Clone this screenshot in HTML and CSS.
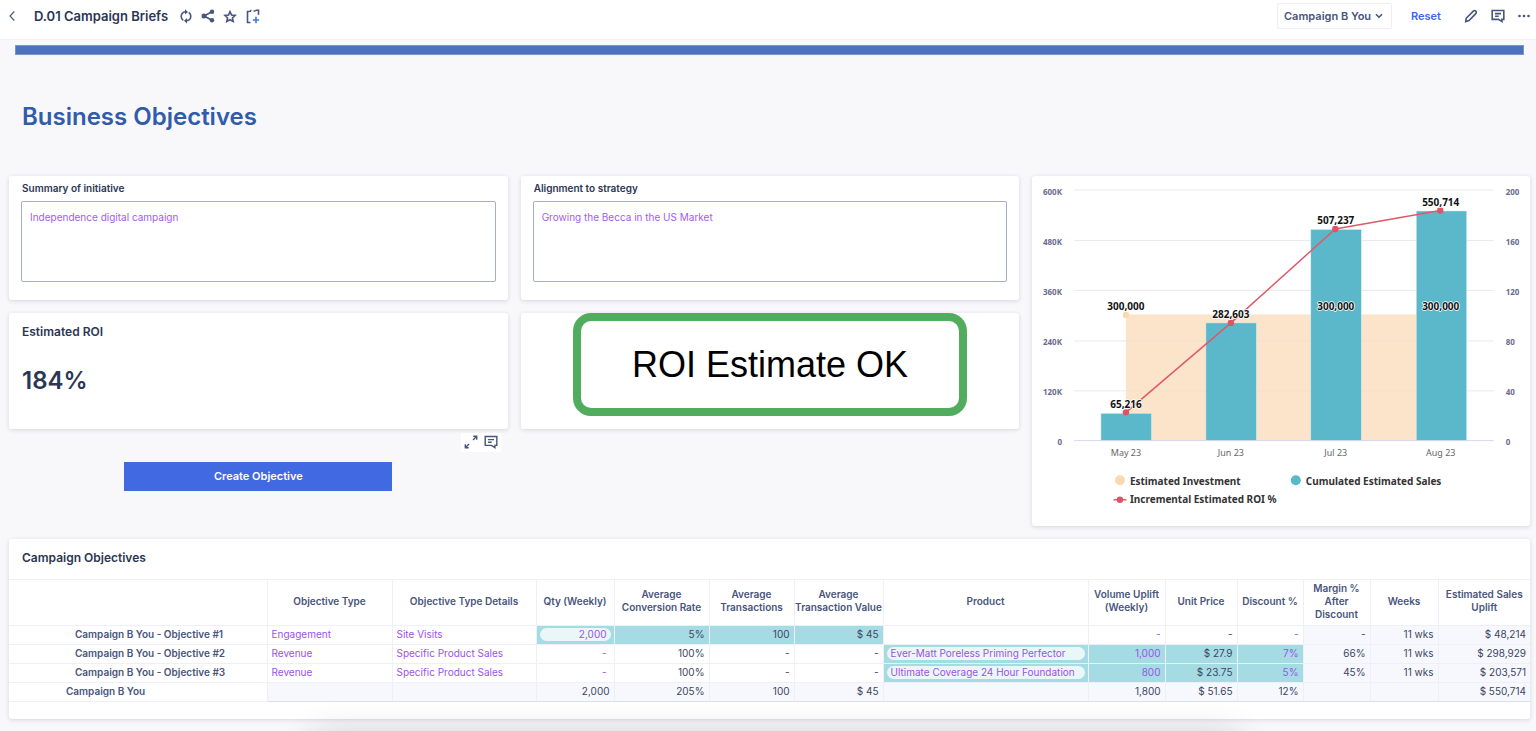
FILE: index.html
```html
<!DOCTYPE html>
<html lang="en">
<head>
<meta charset="utf-8">
<title>D.01 Campaign Briefs</title>
<link rel="stylesheet" href="styles.css">
</head>
<body>
<header class="topbar">
  <button class="icon-btn back" aria-label="Back"><svg width="8" height="12" viewBox="0 0 8 12"><path d="M6.200 1.500 2 6l4.200 4.500" /></svg></button>
  <h1 class="page-title">D.01 Campaign Briefs</h1>
  <div class="title-actions">
    <button class="icon-btn" aria-label="Refresh"><svg width="14" height="16" viewBox="0 0 14 16"><path d="M4.300 12.300A4.700 4.700 0 0 1 4.300 4.400Q5.200 3.800 6.500 3.800M9.700 4.300A4.700 4.700 0 0 1 9.700 12.200Q8.800 12.800 7.500 12.800"/><path class="solid" d="M6 1.200 9 3.900 6 6.500zM8 10.100v5.300L5 12.700z"/></svg></button>
    <button class="icon-btn share" aria-label="Share"><svg width="14" height="14" viewBox="0 0 14 14"><path d="M11 2.800 3 7l8 4.200"/><circle class="solid" cx="11" cy="2.700" r="2.200"/><circle class="solid" cx="3" cy="7" r="2.500"/><circle class="solid" cx="11" cy="11.300" r="2.200"/></svg></button>
    <button class="icon-btn" aria-label="Add to favourites"><svg width="14" height="16" viewBox="0 0 14 16"><path d="m7 3.700 1.500 3.300 3.600.4-2.700 2.500.8 3.600L7 11.700l-3.200 1.800.8-3.600-2.700-2.500 3.600-.4z"/></svg></button>
    <button class="icon-btn" aria-label="Add page"><svg width="16" height="16" viewBox="0 0 16 16"><path d="M5.500 14.500H2.500V3.500H4.500M6.500 2.300Q5.200 2.300 5.200 4M8.500 3h2M10.500 2.300h3v4.500"/><path class="accent" d="M11 8.800v6.400M7.800 12h6.400"/></svg></button>
  </div>
  <div class="page-tools">
    <div class="picker">
      <select aria-label="Campaign"><option>Campaign B You</option></select>
      <svg class="chevron" width="8" height="6" viewBox="0 0 8 6"><path d="m1 1.200 3 3 3-3"/></svg>
    </div>
    <button class="reset">Reset</button>
    <button class="icon-btn" aria-label="Edit"><svg width="14" height="14" viewBox="0 0 14 14"><path d="M1.700 12.600 2.200 9.300 9.300 2.100a1.700 1.700 0 0 1 2.500 0 1.700 1.700 0 0 1 0 2.500L5 11.600z"/></svg></button>
    <button class="icon-btn" aria-label="Comments"><svg width="14" height="14" viewBox="0 0 14 14"><path d="M1.200 1.500h11.600v8.900h-1.900v2.200l-3.400-2.200H1.200z"/><path d="M4 4.600h6M4 7.200h3.700"/></svg></button>
    <button class="icon-btn" aria-label="More"><svg width="12" height="4" viewBox="0 0 12 4"><circle class="solid" cx="1.500" cy="2" r="1.300"/><circle class="solid" cx="6" cy="2" r="1.300"/><circle class="solid" cx="10.500" cy="2" r="1.300"/></svg></button>
  </div>
</header>

<main class="page">
  <div class="rule"></div>
  <h2 class="section-title">Business Objectives</h2>

  <div class="board">
    <div class="board-left">
      <section class="card note">
        <label for="summary">Summary of initiative</label>
        <textarea id="summary">Independence digital campaign</textarea>
      </section>
      <section class="card note">
        <label for="alignment">Alignment to strategy</label>
        <textarea id="alignment">Growing the Becca in the US Market</textarea>
      </section>
      <section class="card kpi">
        <h3>Estimated ROI</h3>
        <p>184%</p>
      </section>
      <section class="card status"><div class="status-badge">ROI Estimate OK</div></section>
      <section class="create">
        <div class="hover-tools">
          <button class="icon-btn" aria-label="Expand"><svg width="14" height="14" viewBox="0 0 14 14"><path d="M9 5 12 2M9.300 1.300h3.400V4.700M5 9 2 12M4.700 12.700H1.300V9.300"/></svg></button>
          <button class="icon-btn" aria-label="Comment"><svg width="14" height="14" viewBox="0 0 14 14"><path d="M1.200 1.500h11.600v8.900h-1.900v2.200l-3.400-2.200H1.200z"/><path d="M4 4.600h6M4 7.200h3.700"/></svg></button>
        </div>
        <button class="primary">Create Objective</button>
      </section>
    </div>
    <section class="card chart">
      <svg viewBox="0 0 498 350" role="img" aria-label="Estimated investment, cumulated sales and incremental ROI">
        <path class="grid" d="M42 14h420M42 64.500h420M42 114.500h420M42 165h420M42 215h420"/>
        <rect class="area" x="94" y="138.500" width="316" height="126.500"/>
        <path class="grid faint" d="M94 165h316M94 215h316"/>
        <g class="bars">
          <rect x="69" y="237.500" width="50.500" height="27.500"/>
          <rect x="174" y="147" width="50.500" height="118"/>
          <rect x="279" y="53.500" width="50.500" height="211.500"/>
          <rect x="384.500" y="35" width="50.500" height="230"/>
        </g>
        <path class="axis" d="M42 264.800h420"/>
        <circle class="invest" cx="94" cy="139" r="3.200"/>
        <path class="line" d="M94 236.500 199 147 303.500 53 408.500 34.500"/>
        <g class="points"><circle cx="94" cy="236.500" r="3.200"/><circle cx="199" cy="147" r="3.200"/><circle cx="303.500" cy="53" r="3.200"/><circle cx="408.500" cy="34.500" r="3.200"/></g>
        <g class="values">
          <text x="94" y="134">300,000</text><text x="304" y="134">300,000</text><text x="409" y="134">300,000</text>
          <text x="94" y="232">65,216</text><text x="199" y="142">282,603</text><text x="304" y="48">507,237</text><text x="409" y="30">550,714</text>
        </g>
        <g class="ticks left"><text x="30" y="19">600K</text><text x="30" y="69">480K</text><text x="30" y="119">360K</text><text x="30" y="169">240K</text><text x="30" y="219">120K</text><text x="30" y="269">0</text></g>
        <g class="ticks"><text x="474" y="19">200</text><text x="474" y="69">160</text><text x="474" y="119">120</text><text x="474" y="169">80</text><text x="474" y="219">40</text><text x="474" y="269">0</text></g>
        <g class="months"><text x="94" y="280">May 23</text><text x="199" y="280">Jun 23</text><text x="304" y="280">Jul 23</text><text x="409" y="280">Aug 23</text></g>
        <g class="legend">
          <circle class="invest" cx="88" cy="304.500" r="5"/><text x="98" y="309">Estimated Investment</text>
          <circle class="sales" cx="264" cy="304.500" r="5"/><text x="274" y="309">Cumulated Estimated Sales</text>
          <path class="line" d="M81.500 324h13"/><circle class="roi" cx="88" cy="324" r="3.200"/><text x="98" y="327">Incremental Estimated ROI %</text>
        </g>
      </svg>
    </section>
  </div>

  <section class="card objectives">
    <h3>Campaign Objectives</h3>
    <table>
      <colgroup><col class="c-name"><col class="c-type"><col class="c-details"><col class="c-qty"><col class="c-rate"><col class="c-trans"><col class="c-value"><col class="c-product"><col class="c-volume"><col class="c-price"><col class="c-disc"><col class="c-margin"><col class="c-weeks"><col class="c-uplift"></colgroup>
      <thead>
        <tr><td></td><th scope="col">Objective Type</th><th scope="col">Objective Type Details</th><th scope="col">Qty (Weekly)</th><th scope="col">Average<br>Conversion Rate</th><th scope="col">Average<br>Transactions</th><th scope="col">Average<br>Transaction Value</th><th scope="col">Product</th><th scope="col">Volume Uplift<br>(Weekly)</th><th scope="col">Unit Price</th><th scope="col">Discount %</th><th scope="col">Margin %<br>After<br>Discount</th><th scope="col">Weeks</th><th scope="col">Estimated Sales<br>Uplift</th></tr>
      </thead>
      <tbody>
        <tr><th scope="row">Campaign B You - Objective #1</th><td class="text edit">Engagement</td><td class="text edit">Site Visits</td><td class="edit hot boxed"><span class="pill">2,000</span></td><td class="hot">5%</td><td class="hot">100</td><td class="hot">$ 45</td><td></td><td class="edit">-</td><td>-</td><td class="edit">-</td><td class="calc">-</td><td class="calc">11 wks</td><td class="calc">$ 48,214</td></tr>
        <tr><th scope="row">Campaign B You - Objective #2</th><td class="text edit">Revenue</td><td class="text edit">Specific Product Sales</td><td class="edit inset">-</td><td>100%</td><td>-</td><td>-</td><td class="text edit hot boxed"><span class="pill">Ever-Matt Poreless Priming Perfector</span></td><td class="edit hot">1,000</td><td class="hot">$ 27.9</td><td class="edit hot">7%</td><td class="calc">66%</td><td class="calc">11 wks</td><td class="calc">$ 298,929</td></tr>
        <tr><th scope="row">Campaign B You - Objective #3</th><td class="text edit">Revenue</td><td class="text edit">Specific Product Sales</td><td class="edit inset">-</td><td>100%</td><td>-</td><td>-</td><td class="text edit hot boxed"><span class="pill">Ultimate Coverage 24 Hour Foundation</span></td><td class="edit hot">800</td><td class="hot">$ 23.75</td><td class="edit hot">5%</td><td class="calc">45%</td><td class="calc">11 wks</td><td class="calc">$ 203,571</td></tr>
        <tr class="total"><th scope="row">Campaign B You</th><td></td><td></td><td>2,000</td><td>205%</td><td>100</td><td>$ 45</td><td></td><td>1,800</td><td>$ 51.65</td><td>12%</td><td></td><td></td><td>$ 550,714</td></tr>
      </tbody>
    </table>
  </section>
</main>
<div class="bottom-shade"></div>
</body>
</html>
```
FILE: styles.css
```css
* { box-sizing: border-box; }

body {
  margin: 0;
  min-height: 100vh;
  position: relative;
  overflow-x: hidden;
  background: #f8f8fb;
  color: #2b3654;
  font-family: Inter, "Open Sans", sans-serif;
  font-size: 10px;
}

h1, h2, h3, p { margin: 0; }
button { font: inherit; border: 0; padding: 0; background: none; cursor: pointer; }
svg { display: block; }

.icon-btn { flex: none; }
.icon-btn svg, .chevron { fill: none; stroke: #48557c; stroke-width: 1.6; overflow: visible; }
.icon-btn .solid { fill: #48557c; stroke: none; }
.icon-btn .accent { stroke: #3f78e0; }

.topbar {
  display: flex;
  align-items: center;
  height: 40px;
  padding: 0 6px 7px 8px;
  background: #fff;
  border-bottom: 1px solid #f0f1f6;
}
.back { margin-right: 18px; }
.icon-btn.back svg { stroke-width: 1.1; }
.page-title { font-size: 13px; font-weight: 600; line-height: 20px; }
.title-actions { display: flex; align-items: center; gap: 8px; margin-left: 11px; }
.page-tools { display: flex; align-items: center; gap: 13px; margin-left: auto; }
.picker { display: flex; align-items: center; position: relative; margin-right: 6px; }
.picker select {
  appearance: none;
  width: 115px;
  height: 26px;
  padding: 0 20px 0 6px;
  border: 1px solid #eeeef8;
  border-radius: 2px;
  background: #fff;
  color: #48557c;
  font: 600 11px/16px Inter, "Open Sans", sans-serif;
}
.chevron { position: absolute; right: 9px; pointer-events: none; }
.reset { margin-right: 10px; color: #4067e8; font-size: 11px; font-weight: 600; }

.page { padding: 5px 6px 12px 9px; }
.rule { height: 10px; margin: 0 6px; background: #4c72be; border: 1px solid #7895cd; }
.section-title {
  margin-left: 13px;
  padding: 46px 0 43px;
  color: #305cab;
  font-size: 24px;
  font-weight: 600;
  line-height: 32px;
}

.card { background: #fff; border-radius: 3px; box-shadow: 0 1px 4px rgba(30, 35, 60, .16); }
.board { display: grid; grid-template-columns: minmax(0, 1011fr) minmax(0, 498fr); gap: 13px; }
.board-left {
  display: grid;
  grid-template-columns: 1fr 1fr;
  grid-template-rows: auto auto 1fr;
  column-gap: 13px;
  align-content: start;
}
.note { display: flex; flex-direction: column; gap: 5px; padding: 5px 12px 18px; margin-bottom: 13px; }
.note label { padding-left: 1px; font-size: 10px; font-weight: 600; line-height: 15px; }
.note textarea {
  display: block;
  width: 100%;
  height: 81px;
  padding: 8px;
  border: 1px solid #a6adc6;
  border-radius: 2px;
  resize: none;
  color: #a35cf0;
  font: 10px/15px Inter, "Open Sans", sans-serif;
}
.kpi { padding: 11px 13px 32px; }
.kpi h3 { font-size: 12px; font-weight: 600; line-height: 16px; }
.kpi p { margin-top: 25px; font-size: 24px; font-weight: 600; line-height: 32px; }
.status { display: flex; align-items: flex-start; justify-content: center; }
.status-badge {
  width: 79%;
  border: 8px solid #51ad5d;
  border-radius: 18px;
  padding: 23px 0 22px;
  color: #000;
  font: 36px/42px "Liberation Sans", Arial, sans-serif;
  text-align: center;
}
.create { display: flex; flex-direction: column; align-items: center; gap: 10px; padding: 4px 7px 0; }
.hover-tools { display: flex; gap: 6px; align-self: flex-end; padding: 2px 3px 3px; background: #fff; }
.hover-tools .icon-btn svg { stroke-width: 1.4; }
.primary {
  width: 268px;
  height: 29px;
  padding-bottom: 2px;
  background: #4169e1;
  color: #fff;
  font-size: 11px;
  font-weight: 600;
}

.chart svg { width: 100%; height: auto; font-family: "Noto Sans", sans-serif; }
.grid { stroke: #e9e9e9; fill: none; }
.grid.faint { stroke: #f3dfca; }
.area { fill: #fbe4ca; }
.bars { fill: #5ab8ca; stroke: #d9eef2; stroke-width: .5; }
.axis { stroke: #d2d9ef; }
.invest { fill: #fad9b0; }
.sales { fill: #5ab8ca; }
.line { fill: none; stroke: #e0596a; stroke-width: 1.5; }
.points, .roi { fill: #dd5466; }
.values text { font-size: 10px; font-weight: 700; fill: #111; text-anchor: middle; paint-order: stroke; stroke: #fff; stroke-width: 1.5; stroke-linejoin: round; }
.ticks text { font-size: 8px; font-weight: 700; fill: #686b8e; }
.ticks.left text { text-anchor: end; }
.months text { font-size: 9px; fill: #666; text-anchor: middle; }
.legend text { font-size: 10px; font-weight: 700; fill: #333; }

.objectives { margin-top: 13px; padding-bottom: 17px; }
.objectives h3 { padding: 11px 13px 13px; font-size: 12px; font-weight: 600; line-height: 16px; }
table { width: 100%; table-layout: fixed; border-collapse: collapse; line-height: 13px; white-space: nowrap; }
.c-name { width: 258px; }
.c-type { width: 125px; }
.c-details { width: 144px; }
.c-qty { width: 78px; }
.c-rate { width: 95px; }
.c-trans { width: 85px; }
.c-value { width: 89px; }
.c-product { width: 205px; }
.c-volume { width: 77px; }
.c-price { width: 72px; }
.c-disc { width: 66px; }
.c-margin { width: 67px; }
.c-weeks { width: 68px; }
.c-uplift { width: 92px; }
thead tr { height: 46px; }
tbody tr { height: 19px; }
th, td { padding: 0 4px; border: 1px solid #eeeff8; }
thead th { padding: 0 0 2px; color: #48557c; font-weight: 600; text-align: center; }
tr > :first-child { border-left: 0; }
tr > :last-child { border-right: 0; }
tbody th { padding-left: 66px; color: #48557c; font-weight: 600; text-align: left; }
tbody td { color: #3b4563; text-align: right; }
tbody .text { text-align: left; }
tbody .edit { color: #9a52ea; }
tbody .hot { background: #a5dce4; }
tbody .inset { padding-right: 7px; }
tbody .boxed { padding: 0 3px; }
.calc, .total td { background: #f7f8fd; }
.total th { padding-left: 57px; }
.total td { border-bottom-color: #dcdfe8; }
.pill { display: block; padding: 0 4px; border-radius: 7px; background: #eaf7f9; }

/* soft shadow rising from the lower edge of the window */
.bottom-shade {
  position: absolute;
  inset: auto 0 0 0;
  height: 40px;
  overflow: hidden;
  pointer-events: none;
}
.bottom-shade::after {
  content: "";
  display: block;
  height: 40px;
  margin: 46px 19% 0 20%;
  border-radius: 20px;
  box-shadow: 0 0 36px rgba(0, 0, 0, .2);
}
```
